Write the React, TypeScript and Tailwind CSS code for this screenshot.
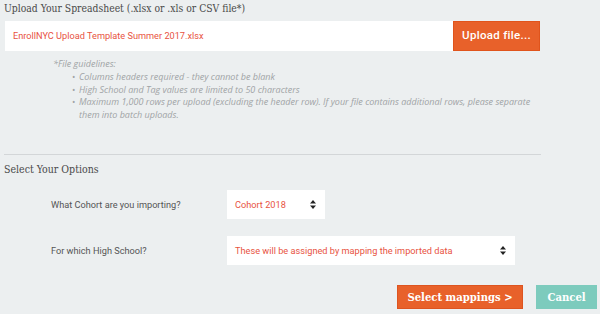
const slab = "font-['DejaVu_Serif_Condensed','DejaVu_Serif',serif]";

const guidelines = [
  "Columns headers required - they cannot be blank",
  "High School and Tag values are limited to 50 characters",
  "Maximum 1,000 rows per upload (excluding the header row). If your file contains additional rows, please separate them into batch uploads.",
];

function Arrows() {
  return (
    <svg width="6" height="9" viewBox="0 0 6 9" className="shrink-0">
      <path d="M3 0 L6 3.5 H0 Z" fill="#222" />
      <path d="M3 9 L6 5.5 H0 Z" fill="#222" />
    </svg>
  );
}

export default function App() {
  return (
    <div className="w-[600px] h-[314px] overflow-hidden bg-[#eceff0] font-['Roboto',sans-serif]">
      <h2 className={`${slab} pl-[4px] pt-[1px] text-[10.3px] leading-[15px] text-[#4a4a4a]`}>
        Upload Your Spreadsheet (.xlsx or .xls or CSV file*)
      </h2>

      <div className="mt-[5px] ml-[5px] flex h-[30px] w-[535px]">
        <div className="flex flex-1 items-center bg-white pl-[8px] text-[9.2px] text-[#e8533f]">
          EnrollNYC Upload Template Summer 2017.xlsx
        </div>
        <button className="flex w-[87px] items-center justify-center border border-[#e0541c] bg-[#e8612a] text-[11.5px] font-medium tracking-[0.3px] text-white">
          Upload file...
        </button>
      </div>

      <div className="mt-[7px] ml-[53px] w-[485px] font-['Open_Sans',sans-serif] text-[9px] italic leading-[12.6px] text-[#9fa3a5]">
        <p>*File guidelines:</p>
        <ul className="mt-[0.5px]">
          {guidelines.map((g) => (
            <li key={g} className="flex">
              <span className="w-[26px] shrink-0 pl-[19px] not-italic">•</span>
              <span>{g}</span>
            </li>
          ))}
        </ul>
      </div>

      <div className="mt-[33px] ml-[4px] w-[537px] border-t border-[#d3d6d8]" />

      <h3 className={`${slab} pl-[4px] pt-[7px] text-[10.5px] leading-[15px] text-[#4a4a4a]`}>
        Select Your Options
      </h3>

      <div className="mt-[13px] flex items-center">
        <span className="w-[227px] pl-[51px] text-[9.2px] text-[#555]">What Cohort are you importing?</span>
        <div className="flex h-[29px] w-[98px] items-center justify-between bg-white pl-[8px] pr-[9px] text-[9.2px] text-[#e8533f]">
          <span>Cohort 2018</span>
          <Arrows />
        </div>
      </div>

      <div className="mt-[17px] flex items-center">
        <span className="w-[227px] pl-[51px] text-[9.2px] text-[#555]">For which High School?</span>
        <div className="flex h-[29px] w-[288px] items-center justify-between bg-white pl-[8px] pr-[9px] text-[9.2px] text-[#e8533f]">
          <span>These will be assigned by mapping the imported data</span>
          <Arrows />
        </div>
      </div>

      <div className="mt-[20px] flex gap-[13px] pl-[397px]">
        <button className={`${slab} h-[24px] w-[126px] border border-[#dd5420] bg-[#e8612a] text-[11.2px] font-bold text-white`}>
          Select mappings &gt;
        </button>
        <button className={`${slab} h-[24px] w-[61px] bg-[#7dcbbd] text-[11.2px] font-bold text-white`}>
          Cancel
        </button>
      </div>
    </div>
  );
}
